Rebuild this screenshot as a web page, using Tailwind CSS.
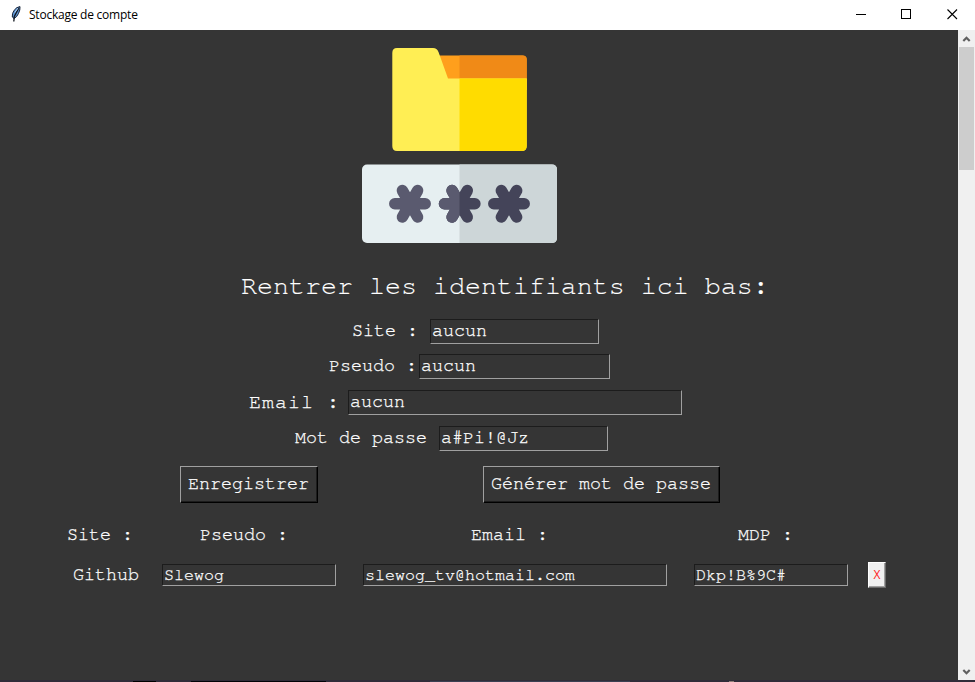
<!DOCTYPE html>
<html lang="fr">
<head>
<meta charset="utf-8">
<title>Stockage de compte</title>
<script src="https://cdn.jsdelivr.net/npm/@tailwindcss/browser@4"></script>
</head>
<body class="w-[975px] h-[682px] overflow-hidden bg-[#353535] flex flex-col">
<header class="h-[30px] shrink-0 bg-white flex items-center text-black">
  <svg class="ml-[10px] w-[12px] h-[16px] -mt-[2px]" viewBox="0 0 12 16">
    <path d="M10 .6Q6.500 1 4.200 4.200Q1.800 7.500 2.300 11L4 12.500Q7 11 8.500 7.500Q10.300 4 10 .6Z" fill="#5b91cf" stroke="#172338" stroke-width="1"/>
    <path d="M8.800 2L4.300 10.500L3.800 15.500" fill="none" stroke="#10151d" stroke-width="1.300"/>
    <path d="M8 2L4.800 6.500" stroke="#a9cef3" stroke-width="1"/>
  </svg>
  <span class="ml-[7px] w-[112px] whitespace-nowrap font-['Open_Sans','Noto_Sans',sans-serif] text-[12px] leading-[30px] tracking-[-0.23px]">Stockage de compte</span>
  <div class="ml-auto mr-[17px] flex items-center gap-[35px] -mt-[2px]">
    <svg class="w-[11px] h-[11px]" viewBox="0 0 11 11" shape-rendering="crispEdges"><path d="M1 5.500H11" stroke="#000"/></svg>
    <svg class="w-[11px] h-[11px]" viewBox="0 0 11 11" shape-rendering="crispEdges"><path d="M.5 .5H9.500V9.500H.5Z" fill="none" stroke="#000"/></svg>
    <svg class="w-[11px] h-[11px]" viewBox="0 0 11 11"><path d="M.5 .5L10 10M10 .5L.5 10" stroke="#000" stroke-width="1.100"/></svg>
  </div>
</header>
<div class="h-[650px] shrink-0 flex">
  <main class="w-[958px] flex flex-col items-start text-white font-['Nimbus_Mono_PS','FreeMono','Liberation_Mono',monospace] text-[18.33px] leading-[22px] whitespace-pre [-webkit-text-stroke:0.25px_#fff]">
    <svg class="mt-[18px] ml-[362px] w-[195px] h-[195px] shrink-0" viewBox="362 48 195 195">
      <path d="M430 55.500H522.500Q526.700 55.500 526.700 59.500V90H430Z" fill="#ff9f1c"/>
      <path d="M459.500 55.500H522.500Q526.700 55.500 526.700 59.500V90H459.500Z" fill="#f08a17"/>
      <path d="M397 48H433Q437 48 438.500 52L448 78.500H526.700V146Q526.700 151 521.700 151H397Q392.300 151 392.300 146V53Q392.300 48 397 48Z" fill="#ffee54"/>
      <path d="M459.500 78.500H526.700V146Q526.700 151 521.700 151H459.500Z" fill="#ffdc00"/>
      <rect x="362" y="164.500" width="195" height="78.500" rx="5" fill="#e6eff1"/>
      <path d="M459.500 164.500H552Q557 164.500 557 169.500V238Q557 243 552 243H459.500Z" fill="#cdd6d8"/>
      <defs>
        <path id="star" d="M-15.200 0H15.200M-7.600 -13.200L7.600 13.200M7.600 -13.200L-7.600 13.200"/>
        <clipPath id="left"><path d="M362 164H459.500V243H362Z"/></clipPath>
      </defs>
      <g fill="none" stroke-width="11.500" stroke-linecap="round">
        <use href="#star" transform="translate(410 203.800)" stroke="#5a5a6f"/>
        <use href="#star" transform="translate(459.700 203.800)" stroke="#444459"/>
        <g clip-path="url(#left)"><use href="#star" transform="translate(459.700 203.800)" stroke="#5a5a6f"/></g>
        <use href="#star" transform="translate(509 203.800)" stroke="#444459"/>
      </g>
    </svg>
    <h1 class="mt-[28px] ml-[241px] h-[32px] text-[26.67px] leading-[31px] [-webkit-text-stroke:0.1px_#fff]">Rentrer les identifiants ici bas:</h1>
    <div class="mt-[16px] flex h-[25px]">
      <label class="pl-[352px] w-[430px] leading-[24px]">Site :</label>
      <div class="w-[169px] pl-[1px] border border-t-[#1c1c1c] border-l-[#1c1c1c] border-b-[#a0a0a0] border-r-[#a0a0a0]">aucun</div>
    </div>
    <div class="mt-[10px] flex h-[25px]">
      <label class="pl-[329px] w-[419px] leading-[24px]">Pseudo :</label>
      <div class="w-[191px] pl-[1px] border border-t-[#1c1c1c] border-l-[#1c1c1c] border-b-[#a0a0a0] border-r-[#a0a0a0]">aucun</div>
    </div>
    <div class="mt-[11px] flex h-[25px]">
      <label class="pl-[249px] w-[348px] text-[20px] tracking-[1px] leading-[24px]">Email :</label>
      <div class="w-[334px] pl-[1px] border border-t-[#1c1c1c] border-l-[#1c1c1c] border-b-[#a0a0a0] border-r-[#a0a0a0]">aucun</div>
    </div>
    <div class="mt-[11px] flex h-[25px]">
      <label class="pl-[295px] w-[439px] leading-[24px]">Mot de passe</label>
      <div class="w-[169px] pl-[1px] border border-t-[#1c1c1c] border-l-[#1c1c1c] border-b-[#a0a0a0] border-r-[#a0a0a0]">a#Pi!@Jz</div>
    </div>
    <div class="mt-[15px] ml-[180px] flex gap-[165px] h-[37px] leading-[34px]">
      <button class="w-[138px] pr-[1px] pb-[1px] border border-t-[#a0a0a0] border-l-[#a0a0a0] border-b-black border-r-black shadow-[inset_-1px_-1px_#1c1c1c]">Enregistrer</button>
      <button class="w-[237px] pr-[1px] pb-[1px] border border-t-[#a0a0a0] border-l-[#a0a0a0] border-b-black border-r-black shadow-[inset_-1px_-1px_#1c1c1c]">Générer mot de passe</button>
    </div>
    <div class="mt-[21px] flex h-[23px] pl-[67px]">
      <span class="w-[133px]">Site :</span><span class="w-[271px]">Pseudo :</span><span class="w-[267px]">Email :</span><span>MDP :</span>
    </div>
    <div class="mt-[15px] flex h-[26px] items-center text-[16.67px] leading-[21px]">
      <span class="pl-[73px] w-[162px] text-[18.33px] leading-[26px]">Github</span>
      <div class="w-[174px] h-[22px] pl-[1px] mr-[27px] border border-t-[#1c1c1c] border-l-[#1c1c1c] border-b-[#a0a0a0] border-r-[#a0a0a0]">Slewog</div>
      <div class="w-[304px] h-[22px] pl-[1px] mr-[27px] border border-t-[#1c1c1c] border-l-[#1c1c1c] border-b-[#a0a0a0] border-r-[#a0a0a0]">slewog_tv@hotmail.com</div>
      <div class="w-[154px] h-[22px] pl-[1px] mr-[20px] border border-t-[#1c1c1c] border-l-[#1c1c1c] border-b-[#a0a0a0] border-r-[#a0a0a0]">Dkp!B%9C#</div>
      <button class="w-[18px] h-[26px] bg-[#f0f0f0] border border-t-white border-l-white border-b-[#696969] border-r-[#696969] shadow-[inset_-1px_-1px_#a0a0a0] text-[#ff1c24] font-['Open_Sans',sans-serif] text-[12px] leading-[24px] [-webkit-text-stroke:0]">X</button>
    </div>
  </main>
  <aside class="w-[17px] bg-[#f0f0f0] flex flex-col items-center">
    <svg class="w-[17px] h-[17px] shrink-0" viewBox="0 0 17 17"><path d="M5.300 11L8.500 7.800L11.700 11" fill="none" stroke="#606060" stroke-width="2.200"/></svg>
    <div class="w-[15px] h-[123px] bg-[#cdcdcd]"></div>
    <svg class="w-[17px] h-[17px] mt-auto shrink-0" viewBox="0 0 17 17"><path d="M5.300 7L8.500 10.200L11.700 7" fill="none" stroke="#606060" stroke-width="2.200"/></svg>
  </aside>
</div>
<footer class="h-[2px] shrink-0 bg-[#302c39] flex items-end">
  <div class="ml-[133px] w-[23px] h-[1px] bg-black"></div>
  <div class="ml-[35px] w-[135px] h-[1px] bg-[#020308]"></div>
  <div class="ml-[104px] w-[200px] h-[1px] bg-[#3b4052]"></div>
  <div class="ml-[99px] w-[5px] h-[1px] bg-[#8f7f78]"></div>
</footer>
</body>
</html>
